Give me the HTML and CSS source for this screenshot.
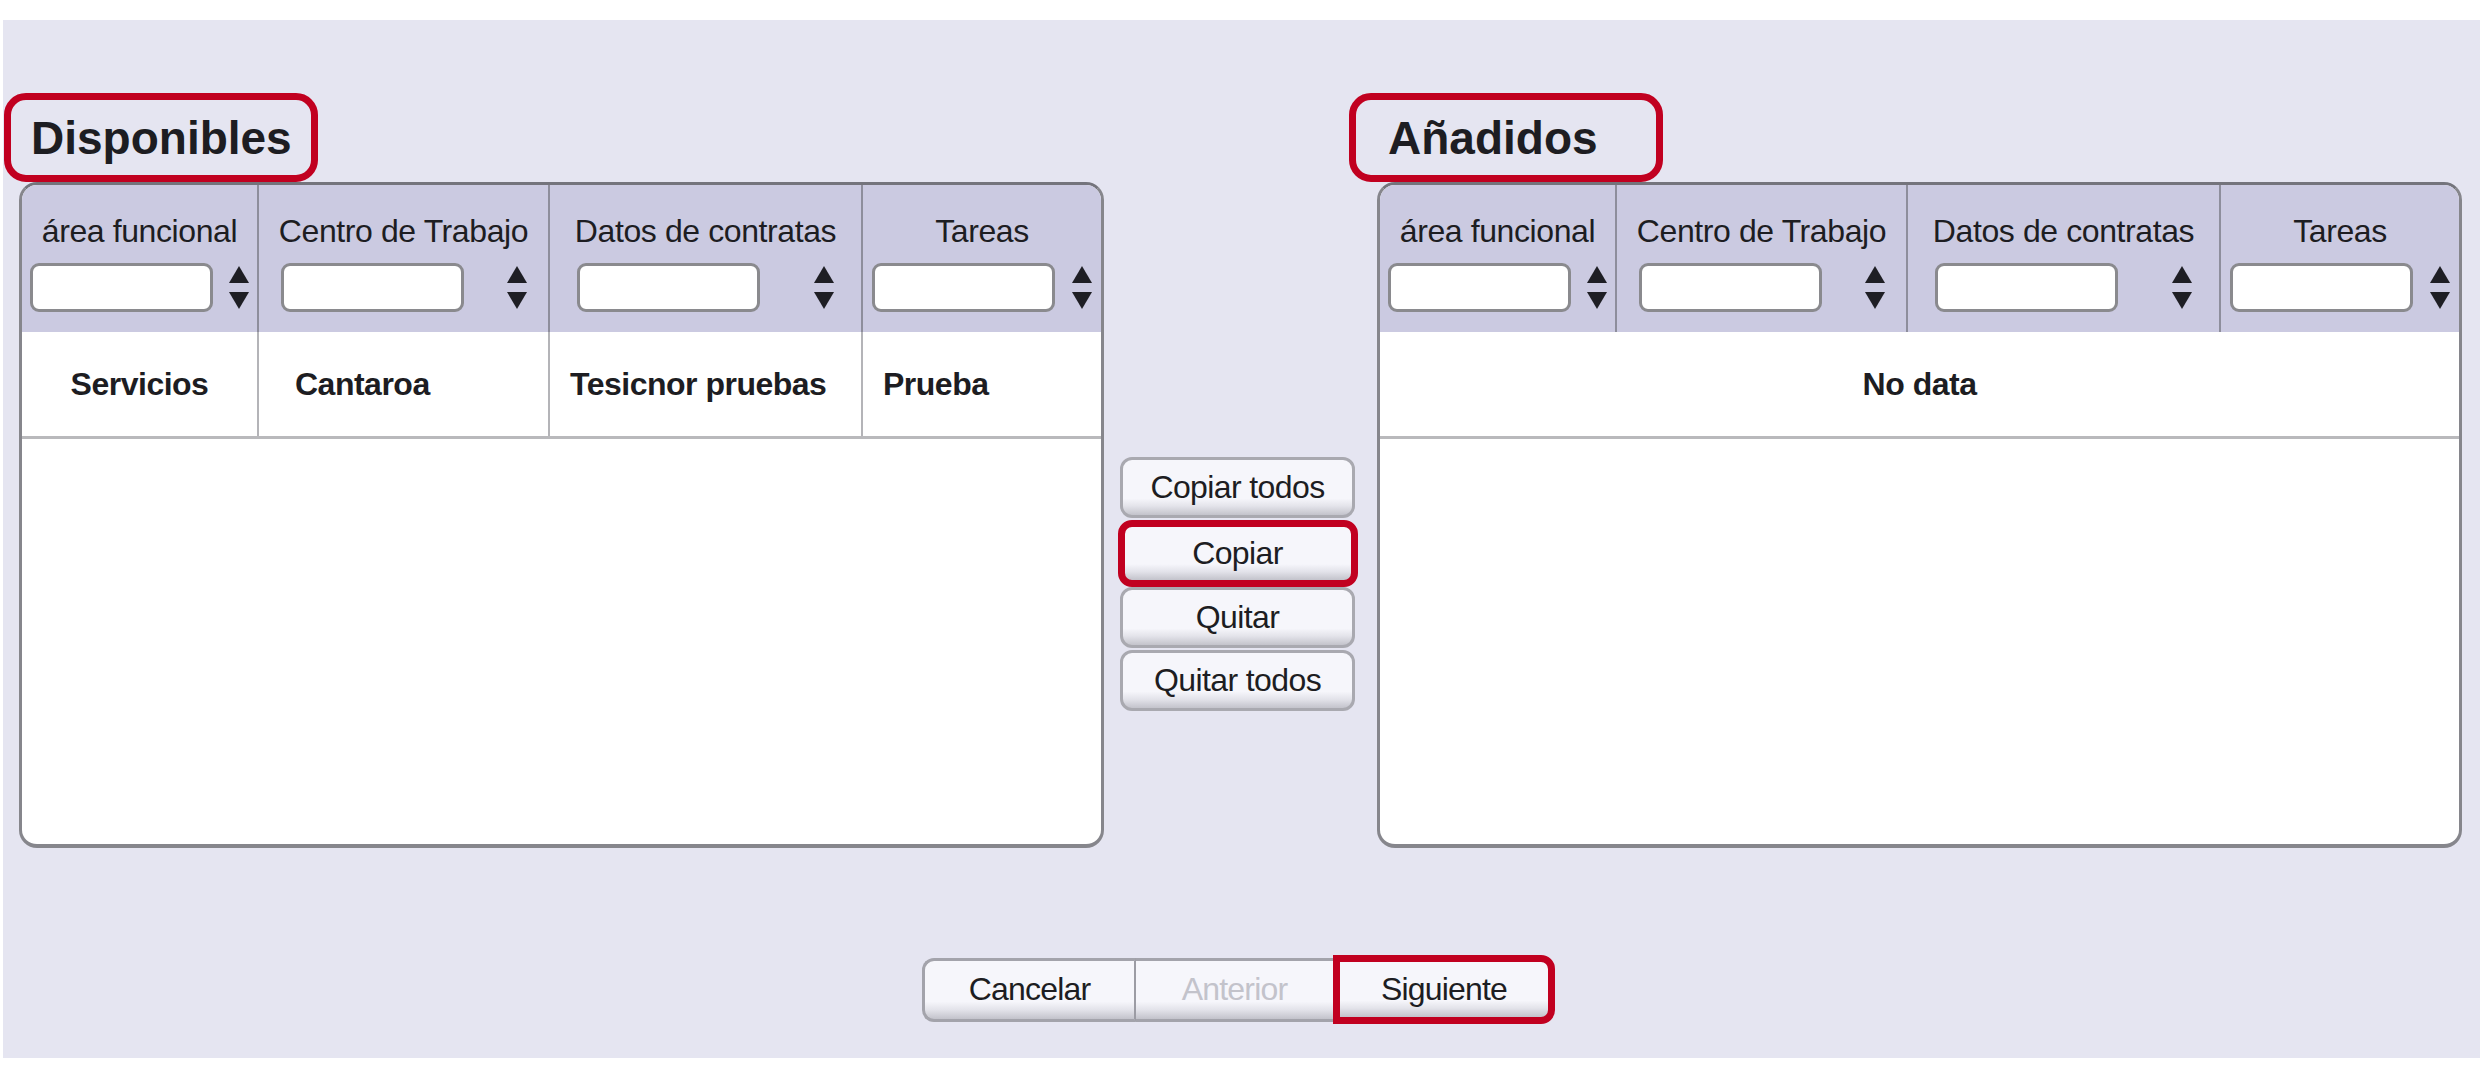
FILE: index.html
```html
<!DOCTYPE html>
<html>
<head>
    <title>Asignar tareas</title>
    <link rel="stylesheet" href="styles.css">
</head>
<body>
    <div class="wizard">
        <div class="lists">
            <section class="side">
                <h2 class="side-title">Disponibles</h2>
                <div class="grid">
                    <div class="grid-head">
                        <div class="hcell c1">
                            <span class="hlabel">área funcional</span>
                            <div class="filter"><input class="filter-input" type="text"><span class="sorter"><i class="up"></i><i class="down"></i></span></div>
                        </div>
                        <div class="hcell c2">
                            <span class="hlabel">Centro de Trabajo</span>
                            <div class="filter"><input class="filter-input" type="text"><span class="sorter"><i class="up"></i><i class="down"></i></span></div>
                        </div>
                        <div class="hcell c3">
                            <span class="hlabel">Datos de contratas</span>
                            <div class="filter"><input class="filter-input" type="text"><span class="sorter"><i class="up"></i><i class="down"></i></span></div>
                        </div>
                        <div class="hcell c4">
                            <span class="hlabel">Tareas</span>
                            <div class="filter"><input class="filter-input" type="text"><span class="sorter"><i class="up"></i><i class="down"></i></span></div>
                        </div>
                    </div>
                    <div class="grid-row">
                        <div class="dcell c1">Servicios</div>
                        <div class="dcell c2">Cantaroa</div>
                        <div class="dcell c3">Tesicnor pruebas</div>
                        <div class="dcell c4">Prueba</div>
                    </div>
                </div>
            </section>

            <div class="mover">
                <button class="btn">Copiar todos</button>
                <button class="btn hl">Copiar</button>
                <button class="btn">Quitar</button>
                <button class="btn">Quitar todos</button>
            </div>

            <section class="side side-right">
                <h2 class="side-title">Añadidos</h2>
                <div class="grid">
                    <div class="grid-head">
                        <div class="hcell c1">
                            <span class="hlabel">área funcional</span>
                            <div class="filter"><input class="filter-input" type="text"><span class="sorter"><i class="up"></i><i class="down"></i></span></div>
                        </div>
                        <div class="hcell c2">
                            <span class="hlabel">Centro de Trabajo</span>
                            <div class="filter"><input class="filter-input" type="text"><span class="sorter"><i class="up"></i><i class="down"></i></span></div>
                        </div>
                        <div class="hcell c3">
                            <span class="hlabel">Datos de contratas</span>
                            <div class="filter"><input class="filter-input" type="text"><span class="sorter"><i class="up"></i><i class="down"></i></span></div>
                        </div>
                        <div class="hcell c4">
                            <span class="hlabel">Tareas</span>
                            <div class="filter"><input class="filter-input" type="text"><span class="sorter"><i class="up"></i><i class="down"></i></span></div>
                        </div>
                    </div>
                    <div class="grid-row">
                        <div class="dcell empty">No data</div>
                    </div>
                </div>
            </section>
        </div>

        <div class="steps">
            <button class="step">Cancelar</button>
            <button class="step disabled">Anterior</button>
            <button class="step hl">Siguiente</button>
        </div>
    </div>
</body>
</html>
```

FILE: styles.css
```css
body { margin: 0; background: #fff; font-family: "Liberation Sans", Arial, sans-serif; color: #1d1d22; }

.wizard { margin: 20px 0 0 3px; width: 2477px; height: 1038px; box-sizing: border-box; padding: 73px 16px 0; background: #e5e5f1; }
.lists { display: flex; align-items: flex-start; }

/* list panels */
.side { width: 1085px; }
.side-title { box-sizing: border-box; width: 314px; height: 89px; margin: 0 0 0 -15px; padding-left: 20px; border: 7px solid #c10020; border-radius: 22px; display: flex; align-items: center; font-size: 46px; font-weight: bold; }
.side-right .side-title { margin-left: -28px; padding-left: 32px; }

.grid { box-sizing: border-box; height: 666px; background: #fff; border: 3px solid #86868c; border-top-color: #74747c; border-bottom-width: 4px; border-radius: 18px; overflow: hidden; }
.grid-head { display: flex; height: 147px; background: #cbcae1; }
.hcell { box-sizing: border-box; display: flex; flex-direction: column; padding-top: 26px; border-right: 2px solid #8e8e9c; }
.hcell:last-child, .dcell:last-child { border-right: 0; }
.c1 { width: 237px; }
.c2 { width: 291px; }
.c3 { width: 313px; }
.c4 { width: 238px; }
.hlabel { font-size: 32px; line-height: 40px; text-align: center; letter-spacing: -0.4px; white-space: nowrap; }

.filter { display: flex; justify-content: space-around; align-items: center; margin-top: 12px; }
.filter-input { box-sizing: border-box; width: 183px; height: 49px; padding: 0 8px; background: #fff; border: 3px solid #8a8a8e; border-radius: 9px; font: 24px "Liberation Sans", Arial, sans-serif; }
.sorter { display: flex; flex-direction: column; gap: 9px; }
.sorter .up { border-left: 10px solid transparent; border-right: 10px solid transparent; border-bottom: 17px solid #1e1e24; }
.sorter .down { border-left: 10px solid transparent; border-right: 10px solid transparent; border-top: 17px solid #1e1e24; }

.grid-row { display: flex; height: 104px; border-bottom: 3px solid #b9b9bc; }
.dcell { box-sizing: border-box; display: flex; align-items: center; padding-left: 20px; border-right: 2px solid #b4b4b8; font-size: 32px; font-weight: bold; letter-spacing: -0.5px; white-space: nowrap; }
.dcell.c1 { justify-content: center; padding-left: 0; }
.dcell.c2 { padding-left: 36px; }
.dcell.empty { width: 100%; justify-content: center; padding: 0; }

/* copy / remove buttons */
.mover { box-sizing: border-box; width: 273px; padding: 364px 6px 0 0; display: flex; flex-direction: column; align-items: center; gap: 2px; }
.btn, .step { box-sizing: border-box; padding: 0; background: linear-gradient(#f6f6fb 0, #f6f6fb 70%, #e3e3ea 84%, #c3c3cb 100%); color: #1d1d22; font: 32px "Liberation Sans", Arial, sans-serif; letter-spacing: -0.6px; cursor: pointer; }
.btn { width: 235px; height: 61px; border: 3px solid #a9a9b0; border-radius: 12px; }
.btn.hl { width: 240px; height: 67px; margin-bottom: -2px; border: 7px solid #c10020; border-radius: 14px; }

/* wizard steps */
.steps { display: flex; justify-content: center; align-items: center; margin-top: 107px; padding-right: 6px; }
.step { height: 64px; border: 3px solid #a3a3ab; border-left: 0; border-right: 2px solid #9c9ca4; letter-spacing: -0.8px; }
.step:first-child { width: 214px; border-left: 3px solid #a3a3ab; border-radius: 12px 0 0 12px; }
.step.disabled { width: 197px; color: #c3c3cb; border-right: 0; }
.step.hl { width: 222px; height: 69px; border: 7px solid #c10020; border-radius: 0 14px 14px 0; }
```
